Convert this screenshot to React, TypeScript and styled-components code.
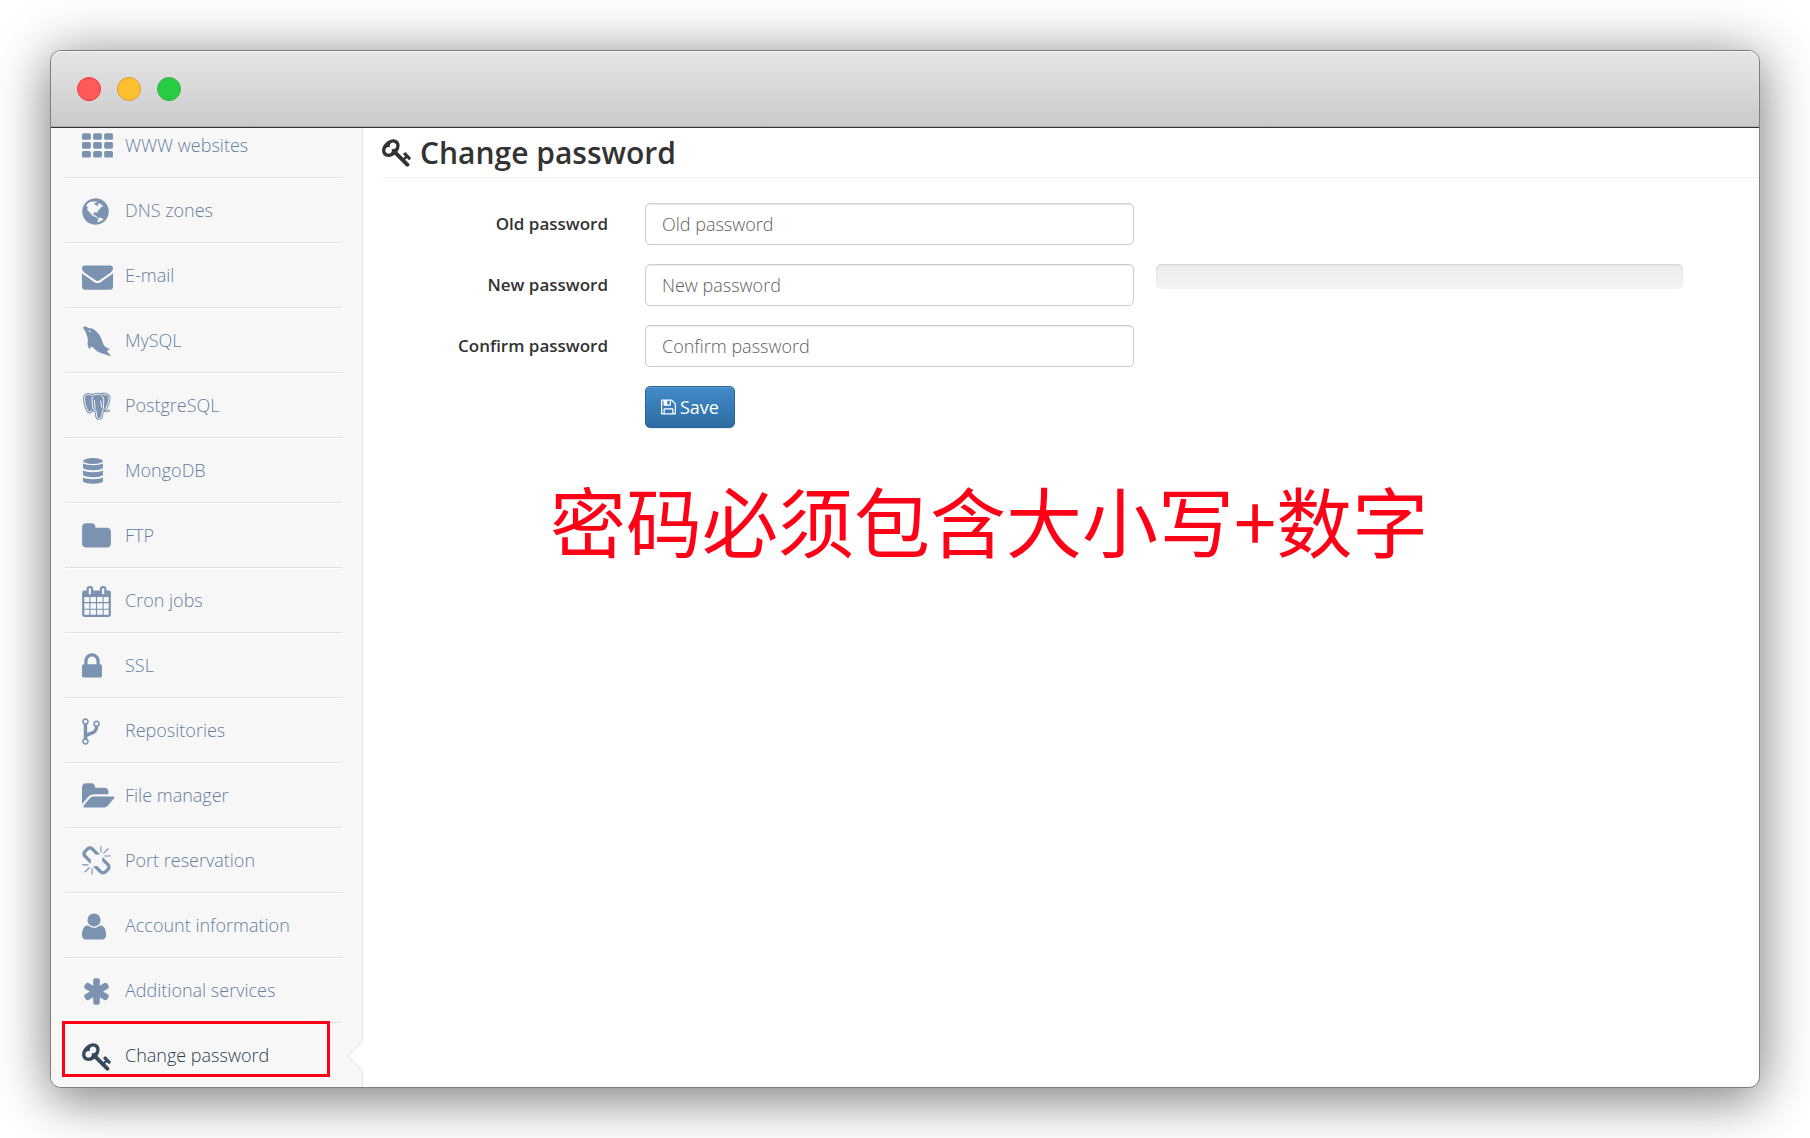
import React from "react";
import styled, { createGlobalStyle } from "styled-components";

const GlobalStyle = createGlobalStyle`
  *, *::before, *::after { box-sizing: border-box; }
  body {
    margin: 0;
    background: #fff;
    color: #333;
    font-family: "Open Sans", "Noto Sans", "Noto Sans CJK SC", sans-serif;
    font-size: 18px;
    line-height: 26px;
  }
`;

const Stage = styled.div`
  height: 100vh;
  min-height: 480px;
  padding: 50px;
  overflow: hidden;
`;

const Window = styled.div`
  height: 100%;
  display: flex;
  flex-direction: column;
  overflow: hidden;
  border: 1px solid #7f7f7f;
  border-radius: 11px;
  background: #fff;
  box-shadow: 0 0 60px rgba(0, 0, 0, 0.26), 0 14px 48px rgba(0, 0, 0, 0.34);
`;

const TitleBar = styled.header`
  flex: none;
  height: 77px;
  display: flex;
  align-items: center;
  gap: 16px;
  padding: 0 26px;
  background: linear-gradient(#e6e6e6, #cacaca);
  border-bottom: 1px solid #333;
  box-shadow: inset 0 1px 0 #f3f3f3, inset 0 -1px 0 #b0b0b0;
`;

const Light = styled.span<{ $fill: string; $edge: string }>`
  width: 24px;
  height: 24px;
  border-radius: 50%;
  background: ${(p) => p.$fill};
  border: 1px solid ${(p) => p.$edge};
`;

const Body = styled.div`
  flex: 1;
  min-height: 0;
  display: flex;
`;

const Sidebar = styled.nav`
  flex: none;
  width: 312px;
  padding: 0 20px 0 14px;
  background: #f7f7f7;
  border-right: 1px solid #d9e3e8;
`;

const MenuList = styled.ul`
  list-style: none;
  margin: -15px 0 0;
  padding: 0;
`;

const MenuItem = styled.li`
  position: relative;
  height: 65px;
  border-bottom: 1px solid #e0e1e1;
  box-shadow: 0 1px 0 #fff;

  &:last-child {
    border-bottom-color: transparent;
    box-shadow: none;
  }
`;

const MenuLink = styled.a<{ $active?: boolean }>`
  display: flex;
  align-items: center;
  height: 100%;
  padding-left: 17px;
  color: ${(p) => (p.$active ? "#2a3d50" : "#6580a2")};
  font-weight: 300;
  text-decoration: none;
`;

const IconSlot = styled.span<{ $active?: boolean }>`
  display: flex;
  width: 43px;
  padding-top: 2px;
  color: ${(p) => (p.$active ? "#34495e" : "#7b93b1")};
`;

const Notch = styled.svg`
  position: absolute;
  right: -21px;
  top: 18px;
`;

const Marker = styled.span`
  position: absolute;
  left: -3px;
  right: 12px;
  top: -2px;
  height: 56px;
  border: 3px solid #ff0016;
  pointer-events: none;
`;

const Main = styled.main`
  flex: 1;
  min-width: 0;
  padding-left: 19px;
`;

const Heading = styled.h1`
  display: flex;
  align-items: center;
  gap: 9px;
  height: 50px;
  margin: 0 0 25px;
  border-bottom: 1px solid #eee;
  font-size: 30px;
  font-weight: 600;
  line-height: 40px;
`;

const Form = styled.form`
  display: flex;
  flex-direction: column;
  gap: 19px;
  padding-right: 76px;
`;

const FormRow = styled.div`
  display: flex;
  align-items: flex-start;
`;

const Label = styled.label`
  flex: none;
  width: 226px;
  margin-right: 37px;
  font-size: 17px;
  line-height: 42px;
  font-weight: 600;
  text-align: right;
`;

const Field = styled.div`
  flex: 489 1 0;
  min-width: 0;
  margin-right: 22px;
`;

const Extra = styled.div`
  flex: 527 1 0;
  min-width: 0;
`;

const Input = styled.input`
  display: block;
  width: 100%;
  height: 42px;
  padding: 0 16px;
  border: 1px solid #ccc;
  border-radius: 5px;
  background: #fff;
  box-shadow: inset 0 1px 1px rgba(0, 0, 0, 0.08);
  color: #555;
  font: inherit;

  &::placeholder { color: #606060; opacity: 1; font-weight: 300; }
`;

const Meter = styled.div`
  height: 25px;
  border-radius: 5px;
  background: linear-gradient(#ebebeb, #f5f5f5);
  box-shadow: inset 0 1px 2px rgba(0, 0, 0, 0.12);
`;

const SaveButton = styled.button`
  display: inline-flex;
  align-items: center;
  gap: 4px;
  height: 42px;
  padding: 0 15px;
  border: 1px solid #2b669a;
  border-radius: 5px;
  background: linear-gradient(#428bca, #2d6ca2);
  box-shadow: inset 0 1px 0 rgba(255, 255, 255, 0.15), 0 1px 1px rgba(0, 0, 0, 0.08);
  color: #fff;
  font: inherit;
`;

const Note = styled.p`
  margin: 39px 0 0;
  padding-left: 168px;
  color: #ff0016;
  font-family: "Noto Sans CJK SC", sans-serif;
  font-size: 76px;
  line-height: 104px;
  white-space: nowrap;
`;

const GLYPHS = {
  globe: {
    width: 1536,
    d: "M768 1408q209 0 385.5 -103t279.5 -279.5t103 -385.5t-103 -385.5t-279.5 -279.5t-385.5 -103t-385.5 103t-279.5 279.5t-103 385.5t103 385.5t279.5 279.5t385.5 103zM1042 887q-2 -1 -9.5 -9.5t-13.5 -9.5q2 0 4.5 5t5 11t3.5 7q6 7 22 15q14 6 52 12q34 8 51 -11q-2 2 9.5 13t14.5 12q3 2 15 4.5t15 7.5l2 22q-12 -1 -17.5 7t-6.5 21q0 -2 -6 -8q0 7 -4.5 8t-11.5 -1t-9 -1q-10 3 -15 7.5t-8 16.5t-4 15q-2 5 -9.5 11t-9.5 10q-1 2 -2.5 5.5t-3 6.5t-4 5.5t-5.5 2.5t-7 -5t-7.5 -10t-4.5 -5q-3 2 -6 1.5t-4.5 -1t-4.5 -3t-5 -3.5q-3 -2 -8.5 -3t-8.5 -2q15 5 -1 11q-10 4 -16 3q9 4 7.5 12t-8.5 14h5q-1 4 -8.5 8.5t-17.5 8.5t-13 6q-8 5 -34 9.5t-33 0.5q-5 -6 -4.5 -10.5t4 -14t3.5 -12.5q1 -6 -5.5 -13t-6.5 -12q0 -7 14 -15.5t10 -21.5q-3 -8 -16 -16t-16 -12q-5 -8 -1.5 -18.5t10.5 -16.5q2 -2 1.5 -4t-3.5 -4.5t-5.5 -4t-6.5 -3.5l-3 -2q-11 -5 -20.5 6t-13.5 26q-7 25 -16 30q-23 8 -29 -1q-5 13 -41 26q-25 9 -58 4q6 1 0 15q-7 15 -19 12q3 6 4 17.5t1 13.5q3 13 12 23q1 1 7 8.5t9.5 13.5t0.5 6q35 -4 50 11q5 5 11.5 17t10.5 17q9 6 14 5.5t14.5 -5.5t14.5 -5q14 -1 15.5 11t-7.5 20q12 -1 3 17q-5 7 -8 9q-12 4 -27 -5q-8 -4 2 -8q-1 1 -9.5 -10.5t-16.5 -17.5t-16 5q-1 1 -5.5 13.5t-9.5 13.5q-8 0 -16 -15q3 8 -11 15t-24 8q19 12 -8 27q-7 4 -20.5 5t-19.5 -4q-5 -7 -5.5 -11.5t5 -8t10.5 -5.5t11.5 -4t8.5 -3q14 -10 8 -14q-2 -1 -8.5 -3.5t-11.5 -4.5t-6 -4q-3 -4 0 -14t-2 -14q-5 5 -9 17.5t-7 16.5q7 -9 -25 -6l-10 1q-4 0 -16 -2t-20.5 -1t-13.5 8q-4 8 0 20q1 4 4 2q-4 3 -11 9.5t-10 8.5q-46 -15 -94 -41q6 -1 12 1q5 2 13 6.5t10 5.5q34 14 42 7l5 5q14 -16 20 -25q-7 4 -30 1q-20 -6 -22 -12q7 -12 5 -18q-4 3 -11.5 10t-14.5 11t-15 5q-16 0 -22 -1q-146 -80 -235 -222q7 -7 12 -8q4 -1 5 -9t2.5 -11t11.5 3q9 -8 3 -19q1 1 44 -27q19 -17 21 -21q3 -11 -10 -18q-1 2 -9 9t-9 4q-3 -5 0.5 -18.5t10.5 -12.5q-7 0 -9.5 -16t-2.5 -35.5t-1 -23.5l2 -1q-3 -12 5.5 -34.5t21.5 -19.5q-13 -3 20 -43q6 -8 8 -9q3 -2 12 -7.5t15 -10t10 -10.5q4 -5 10 -22.5t14 -23.5q-2 -6 9.5 -20t10.5 -23q-1 0 -2.5 -1t-2.5 -1q3 -7 15.5 -14t15.5 -13q1 -3 2 -10t3 -11t8 -2q2 20 -24 62q-15 25 -17 29q-3 5 -5.5 15.5t-4.5 14.5q2 0 6 -1.5t8.5 -3.5t7.5 -4t2 -3q-3 -7 2 -17.5t12 -18.5t17 -19t12 -13q6 -6 14 -19.5t0 -13.5q9 0 20 -10t17 -20q5 -8 8 -26t5 -24q2 -7 8.5 -13.5t12.5 -9.5l16 -8t13 -7q5 -2 18.5 -10.5t21.5 -11.5q10 -4 16 -4t14.5 2.5t13.5 3.5q15 2 29 -15t21 -21q36 -19 55 -11q-2 -1 0.5 -7.5t8 -15.5t9 -14.5t5.5 -8.5q5 -6 18 -15t18 -15q6 4 7 9q-3 -8 7 -20t18 -10q14 3 14 32q-31 -15 -49 18q0 1 -2.5 5.5t-4 8.5t-2.5 8.5t0 7.5t5 3q9 0 10 3.5t-2 12.5t-4 13q-1 8 -11 20t-12 15q-5 -9 -16 -8t-16 9q0 -1 -1.5 -5.5t-1.5 -6.5q-13 0 -15 1q1 3 2.5 17.5t3.5 22.5q1 4 5.5 12t7.5 14.5t4 12.5t-4.5 9.5t-17.5 2.5q-19 -1 -26 -20q-1 -3 -3 -10.5t-5 -11.5t-9 -7q-7 -3 -24 -2t-24 5q-13 8 -22.5 29t-9.5 37q0 10 2.5 26.5t3 25t-5.5 24.5q3 2 9 9.5t10 10.5q2 1 4.5 1.5t4.5 0t4 1.5t3 6q-1 1 -4 3q-3 3 -4 3q7 -3 28.5 1.5t27.5 -1.5q15 -11 22 2q0 1 -2.5 9.5t-0.5 13.5q5 -27 29 -9q3 -3 15.5 -5t17.5 -5q3 -2 7 -5.5t5.5 -4.5t5 0.5t8.5 6.5q10 -14 12 -24q11 -40 19 -44q7 -3 11 -2t4.5 9.5t0 14t-1.5 12.5l-1 8v18l-1 8q-15 3 -18.5 12t1.5 18.5t15 18.5q1 1 8 3.5t15.5 6.5t12.5 8q21 19 15 35q7 0 11 9q-1 0 -5 3t-7.5 5t-4.5 2q9 5 2 16q5 3 7.5 11t7.5 10q9 -12 21 -2q8 8 1 16q5 7 20.5 10.5t18.5 9.5q7 -2 8 2t1 12t3 12q4 5 15 9t13 5l17 11q3 4 0 4q18 -2 31 11q10 11 -6 20q3 6 -3 9.5t-15 5.5q3 1 11.5 0.5t10.5 1.5q15 10 -7 16q-17 5 -43 -12zM879 10q206 36 351 189q-3 3 -12.5 4.5t-12.5 3.5q-18 7 -24 8q1 7 -2.5 13t-8 9t-12.5 8t-11 7q-2 2 -7 6t-7 5.5t-7.5 4.5t-8.5 2t-10 -1l-3 -1q-3 -1 -5.5 -2.5t-5.5 -3t-4 -3t0 -2.5q-21 17 -36 22q-5 1 -11 5.5t-10.5 7t-10 1.5t-11.5 -7q-5 -5 -6 -15t-2 -13q-7 5 0 17.5t2 18.5q-3 6 -10.5 4.5t-12 -4.5t-11.5 -8.5t-9 -6.5t-8.5 -5.5t-8.5 -7.5q-3 -4 -6 -12t-5 -11q-2 4 -11.5 6.5t-9.5 5.5q2 -10 4 -35t5 -38q7 -31 -12 -48q-27 -25 -29 -40q-4 -22 12 -26q0 -7 -8 -20.5t-7 -21.5q0 -6 2 -16z",
  },
  envelope: {
    width: 1792,
    d: "M1792 826v-794q0 -66 -47 -113t-113 -47h-1472q-66 0 -113 47t-47 113v794q44 -49 101 -87q362 -246 497 -345q57 -42 92.5 -65.5t94.5 -48t110 -24.5h1h1q51 0 110 24.5t94.5 48t92.5 65.5q170 123 498 345q57 39 100 87zM1792 1120q0 -79 -49 -151t-122 -123q-376 -261 -468 -325q-10 -7 -42.5 -30.5t-54 -38t-52 -32.5t-57.5 -27t-50 -9h-1h-1q-23 0 -50 9t-57.5 27t-52 32.5t-54 38t-42.5 30.5q-91 64 -262 182.5t-205 142.5q-62 42 -117 115.5t-55 136.5q0 78 41.5 130t118.5 52h1472q65 0 112.5 -47t47.5 -113z",
  },
  folder: {
    width: 1664,
    d: "M1664 928v-704q0 -92 -66 -158t-158 -66h-1216q-92 0 -158 66t-66 158v960q0 92 66 158t158 66h320q92 0 158 -66t66 -158v-32h672q92 0 158 -66t66 -158z",
  },
  calendar: {
    width: 1664,
    d: "M128 -128h288v288h-288v-288zM480 -128h320v288h-320v-288zM128 224h288v320h-288v-320zM480 224h320v320h-320v-320zM128 608h288v288h-288v-288zM864 -128h320v288h-320v-288zM480 608h320v288h-320v-288zM1248 -128h288v288h-288v-288zM864 224h320v320h-320v-320zM512 1088v288q0 13 -9.5 22.5t-22.5 9.5h-64q-13 0 -22.5 -9.5t-9.5 -22.5v-288q0 -13 9.5 -22.5t22.5 -9.5h64q13 0 22.5 9.5t9.5 22.5zM1248 224h288v320h-288v-320zM864 608h320v288h-320v-288zM1248 608h288v288h-288v-288zM1280 1088v288q0 13 -9.5 22.5t-22.5 9.5h-64q-13 0 -22.5 -9.5t-9.5 -22.5v-288q0 -13 9.5 -22.5t22.5 -9.5h64q13 0 22.5 9.5t9.5 22.5zM1664 1152v-1280q0 -52 -38 -90t-90 -38h-1408q-52 0 -90 38t-38 90v1280q0 52 38 90t90 38h128v96q0 66 47 113t113 47h64q66 0 113 -47t47 -113v-96h384v96q0 66 47 113t113 47h64q66 0 113 -47t47 -113v-96h128q52 0 90 -38t38 -90z",
  },
  lock: {
    width: 1152,
    d: "M320 768h512v192q0 106 -75 181t-181 75t-181 -75t-75 -181v-192zM1152 672v-576q0 -40 -28 -68t-68 -28h-960q-40 0 -68 28t-28 68v576q0 40 28 68t68 28h32v192q0 184 132 316t316 132t316 -132t132 -316v-192h32q40 0 68 -28t28 -68z",
  },
  fork: {
    width: 1024,
    d: "M288 64q0 40 -28 68t-68 28t-68 -28t-28 -68t28 -68t68 -28t68 28t28 68zM288 1216q0 40 -28 68t-68 28t-68 -28t-28 -68t28 -68t68 -28t68 28t28 68zM928 1088q0 40 -28 68t-68 28t-68 -28t-28 -68t28 -68t68 -28t68 28t28 68zM1024 1088q0 -52 -26 -96.5t-70 -69.5q-2 -287 -226 -414q-68 -38 -203 -81q-128 -40 -169.5 -71t-41.5 -100v-26q44 -25 70 -69.5t26 -96.5q0 -80 -56 -136t-136 -56t-136 56t-56 136q0 52 26 96.5t70 69.5v820q-44 25 -70 69.5t-26 96.5q0 80 56 136t136 56t136 -56t56 -136q0 -52 -26 -96.5t-70 -69.5v-497q54 26 154 57q55 17 87.5 29.5t70.5 31t59 39.5t40.5 51t28 69.5t8.5 91.5q-44 25 -70 69.5t-26 96.5q0 80 56 136t136 56t136 -56t56 -136z",
  },
  folderOpen: {
    width: 1920,
    d: "M1879 584q0 -31 -31 -66l-336 -396q-43 -51 -120.5 -86.5t-143.5 -35.5h-1088q-34 0 -60.5 13t-26.5 43q0 31 31 66l336 396q43 51 120.5 86.5t143.5 35.5h1088q34 0 60.5 -13t26.5 -43zM1536 928v-160h-832q-94 0 -197 -47.5t-164 -119.5l-337 -396l-5 -6q0 4 -0.5 12.5t-0.5 12.5v960q0 92 66 158t158 66h320q92 0 158 -66t66 -158v-32h544q92 0 158 -66t66 -158z",
  },
  chain: {
    width: 1664,
    d: "M439 265l-256 -256q-11 -9 -23 -9t-23 9q-9 10 -9 23t9 23l256 256q10 9 23 9t23 -9q9 -10 9 -23t-9 -23zM608 224v-320q0 -14 -9 -23t-23 -9t-23 9t-9 23v320q0 14 9 23t23 9t23 -9t9 -23zM384 448q0 -14 -9 -23t-23 -9h-320q-14 0 -23 9t-9 23t9 23t23 9h320q14 0 23 -9t9 -23zM1648 320q0 -120 -85 -203l-147 -146q-83 -83 -203 -83q-121 0 -204 85l-334 335q-21 21 -42 56l239 18l273 -274q28 -28 68 -27.5t68 27.5l147 146q28 28 28 67q0 40 -28 68l-274 275l18 239q35 -21 56 -42l336 -336q84 -86 84 -204zM1031 1044l-239 -18l-273 274q-28 28 -68 28q-39 0 -68 -27l-147 -146q-28 -28 -28 -67q0 -40 28 -68l274 -274l-18 -240q-35 21 -56 42l-336 336q-84 86 -84 204q0 120 85 203l147 146q83 83 203 83q121 0 204 -85l334 -335q21 -21 42 -56zM1664 960q0 -14 -9 -23t-23 -9h-320q-14 0 -23 9t-9 23t9 23t23 9h320q14 0 23 -9t9 -23zM1120 1504v-320q0 -14 -9 -23t-23 -9t-23 9t-9 23v320q0 14 9 23t23 9t23 -9t9 -23zM1527 1353l-256 -256q-11 -9 -23 -9t-23 9q-9 10 -9 23t9 23l256 256q10 9 23 9t23 -9q9 -10 9 -23t-9 -23z",
  },
  user: {
    width: 1408,
    d: "M1408 131q0 -120 -73 -189.5t-194 -69.5h-874q-121 0 -194 69.5t-73 189.5q0 53 3.5 103.5t14 109t26.5 108.5t43 97.5t62 81t85.5 53.5t111.5 20q9 0 42 -21.5t74.5 -48t108 -48t133.5 -21.5t133.5 21.5t108 48t74.5 48t42 21.5q61 0 111.5 -20t85.5 -53.5t62 -81t43 -97.5t26.5 -108.5t14 -109t3.5 -103.5zM1088 1024q0 -159 -112.5 -271.5t-271.5 -112.5t-271.5 112.5t-112.5 271.5t112.5 271.5t271.5 112.5t271.5 -112.5t112.5 -271.5z",
  },
  asterisk: {
    width: 1664,
    d: "M1482 486q46 -26 59.5 -77.5t-12.5 -97.5l-64 -110q-26 -46 -77.5 -59.5t-97.5 12.5l-266 153v-307q0 -52 -38 -90t-90 -38h-128q-52 0 -90 38t-38 90v307l-266 -153q-46 -26 -97.5 -12.5t-77.5 59.5l-64 110q-26 46 -12.5 97.5t59.5 77.5l266 154l-266 154q-46 26 -59.5 77.5t12.5 97.5l64 110q26 46 77.5 59.5t97.5 -12.5l266 -153v307q0 52 38 90t90 38h128q52 0 90 -38t38 -90v-307l266 153q46 26 97.5 12.5t77.5 -59.5l64 -110q26 -46 12.5 -97.5t-59.5 -77.5l-266 -154z",
  },
  key: {
    width: 1683,
    d: "M832 1024q0 80 -56 136t-136 56t-136 -56t-56 -136q0 -42 19 -83q-41 19 -83 19q-80 0 -136 -56t-56 -136t56 -136t136 -56t136 56t56 136q0 42 -19 83q41 -19 83 -19q80 0 136 56t56 136zM1683 320q0 -17 -49 -66t-66 -49q-9 0 -28.5 16t-36.5 33t-38.5 40t-24.5 26l-96 -96l220 -220q28 -28 28 -68q0 -42 -39 -81t-81 -39q-40 0 -68 28l-671 671q-176 -131 -365 -131q-163 0 -265.5 102.5t-102.5 265.5q0 160 95 313t248 248t313 95q163 0 265.5 -102.5t102.5 -265.5q0 -189 -131 -365l355 -355l96 96q-3 3 -26 24.5t-40 38.5t-33 36.5t-16 28.5q0 17 49 66t66 49q13 0 23 -10q6 -6 46 -44.5t82 -79.5t86.5 -86t73 -78t28.5 -41z",
  },
  floppy: {
    width: 1536,
    d: "M384 0h768v384h-768v-384zM1280 0h128v896q0 14 -10 38.5t-20 34.5l-281 281q-10 10 -34 20t-39 10v-416q0 -40 -28 -68t-68 -28h-576q-40 0 -68 28t-28 68v416h-128v-1280h128v416q0 40 28 68t68 28h832q40 0 68 -28t28 -68v-416zM896 928v320q0 13 -9.5 22.5t-22.5 9.5h-192q-13 0 -22.5 -9.5t-9.5 -22.5v-320q0 -13 9.5 -22.5t22.5 -9.5h192q13 0 22.5 9.5t9.5 22.5zM1536 896v-928q0 -40 -28 -68t-68 -28h-1344q-40 0 -68 28t-28 68v1344q0 40 28 68t68 28h928q40 0 88 -20t76 -48l280 -280q28 -28 48 -76t20 -88z",
  },
};

type GlyphName = keyof typeof GLYPHS;

/* The glyph outlines have their baseline at zero and grow upwards. */
function Glyph({ name, size = 31 }: { name: GlyphName; size?: number }) {
  const { width, d } = GLYPHS[name];
  return (
    <svg
      width={Math.round((width * size) / 1792)}
      height={size}
      viewBox={`0 0 ${width} 1792`}
      fill="currentColor"
      aria-hidden="true"
    >
      <path transform="translate(0 1536) scale(1 -1)" d={d} />
    </svg>
  );
}

function GridIcon() {
  return (
    <svg width="31" height="31" viewBox="0 0 1792 1792" fill="currentColor" aria-hidden="true">
      {[128, 640, 1152].map((y) =>
        [0, 640, 1280].map((x) => <rect key={`${x}-${y}`} x={x} y={y} width="512" height="384" rx="96" />)
      )}
    </svg>
  );
}

function DolphinIcon() {
  return (
    <svg width="31" height="31" viewBox="0 0 31 31" fill="currentColor" aria-hidden="true">
      <path
        fillRule="evenodd"
        d="M1 1.200C2 .2 4 .4 5.600 1.400C7 2.100 8.500 2 10 2.600C14 4.200 17.500 8.500 19.500 13C20.500 15.600 21 18 22.500 20C24 21.600 26.500 22.200 28 23.600C27 24.400 25.500 24.300 24.800 25C26 27 28 28.200 29 30C26.500 30.200 24.500 28.600 22 28C18.500 27.200 15 25.600 12.800 23.200C11.500 21.800 10.500 21.500 9.600 20.600C8.600 21.200 8.600 22.800 7.800 23.200C6 21.500 5.200 18.500 5.800 15.500C6.200 13.500 5.500 11.500 4.800 9.500C4 7.500 3.800 6 2.800 4.500C2.300 3.600 1.200 2.600 1 1.200ZM7 4.200C6.600 5 7.400 6.400 8.400 6.200C9 5.400 8 4 7 4.200Z"
      />
    </svg>
  );
}

/* Each part has a thin outline, a light gap inside it and a solid core. */
const ELEPHANT_PARTS = [
  "M9.500 3C5 1.500 2.200 3.200 2.500 7.500C2.800 11.500 4 16 6 19C7.500 20.800 9 19.500 10.300 18L12 10Z",
  "M19 2.500C23 1.200 27 3 27 6.500C27 11 24.500 15 22.500 18L19 12Z",
  "M10.500 4.500C12.500 1.500 19 1.200 21 5C22.300 8 21.500 12 21.300 15C21.300 16.500 21.500 17.500 20.500 18.500C19.500 21 20.500 23.500 19 25.500C18 27 15.500 27 14.800 25C14.200 23 14.500 20.500 14 18.500C12 18.500 10.800 17.500 10.800 15.500C10.200 12 9.500 7.500 10.500 4.500Z",
];

function ElephantIcon() {
  return (
    <svg width="30" height="29" viewBox="0 0 30 29" fill="none" strokeLinejoin="round" aria-hidden="true">
      {ELEPHANT_PARTS.map((d) => (
        <React.Fragment key={d}>
          <path d={d} stroke="currentColor" strokeWidth="3" />
          <path d={d} fill="currentColor" stroke="#f7f7f7" />
        </React.Fragment>
      ))}
      <path d="M21.500 19C23.500 20.200 26 20.200 28 18.500C26.500 18 24.500 18.400 23 17.600" stroke="currentColor" />
      <path d="M12.500 8C12 11 13.500 14 13 17M18.500 8.500C19.800 10.500 18.500 13.500 20 15.500" stroke="#f7f7f7" />
    </svg>
  );
}

function DatabaseIcon() {
  return (
    <svg width="22" height="31" viewBox="0 0 22 31" fill="currentColor" aria-hidden="true">
      <ellipse cx="11" cy="5" rx="10" ry="3" />
      <path d="M1 7.500C5 9.800 17 9.800 21 7.500V12C18 15 4 15 1 12Z" />
      <path d="M1 14.500C5 16.800 17 16.800 21 14.500V19C18 22 4 22 1 19Z" />
      <path d="M1 21.500C5 23.800 17 23.800 21 21.500V25.500C18 28.500 4 28.500 1 25.500Z" />
    </svg>
  );
}

const MENU: { label: string; icon: React.ReactNode; active?: boolean }[] = [
  { label: "WWW websites", icon: <GridIcon /> },
  { label: "DNS zones", icon: <Glyph name="globe" /> },
  { label: "E-mail", icon: <Glyph name="envelope" /> },
  { label: "MySQL", icon: <DolphinIcon /> },
  { label: "PostgreSQL", icon: <ElephantIcon /> },
  { label: "MongoDB", icon: <DatabaseIcon /> },
  { label: "FTP", icon: <Glyph name="folder" /> },
  { label: "Cron jobs", icon: <Glyph name="calendar" /> },
  { label: "SSL", icon: <Glyph name="lock" /> },
  { label: "Repositories", icon: <Glyph name="fork" /> },
  { label: "File manager", icon: <Glyph name="folderOpen" /> },
  { label: "Port reservation", icon: <Glyph name="chain" /> },
  { label: "Account information", icon: <Glyph name="user" /> },
  { label: "Additional services", icon: <Glyph name="asterisk" /> },
  { label: "Change password", icon: <Glyph name="key" />, active: true },
];

const FIELDS = [
  { id: "old-password", label: "Old password" },
  { id: "new-password", label: "New password", meter: true },
  { id: "confirm-password", label: "Confirm password" },
];

export default function App() {
  return (
    <>
      <GlobalStyle />
      <Stage>
        <Window>
          <TitleBar>
            <Light $fill="#ff5a5a" $edge="#f8323a" />
            <Light $fill="#ffbf2f" $edge="#dc9a3c" />
            <Light $fill="#27cc42" $edge="#3fae4c" />
          </TitleBar>
          <Body>
            <Sidebar>
              <MenuList>
                {MENU.map((item) => (
                  <MenuItem key={item.label}>
                    <MenuLink href="#" $active={item.active} aria-current={item.active ? "page" : undefined}>
                      <IconSlot $active={item.active}>{item.icon}</IconSlot>
                      {item.label}
                    </MenuLink>
                    {item.active && (
                      <>
                        <Notch width="16" height="30" viewBox="0 0 16 30" aria-hidden="true">
                          <path d="M16 0V30L15 29L1 15L15 1Z" fill="#fff" />
                          <path d="M15.500 .5L1 15L15.500 29.500" fill="none" stroke="#d9e3e8" />
                        </Notch>
                        <Marker />
                      </>
                    )}
                  </MenuItem>
                ))}
              </MenuList>
            </Sidebar>
            <Main>
              <Heading>
                <Glyph name="key" size={31} />
                Change password
              </Heading>
              <Form onSubmit={(e) => e.preventDefault()}>
                {FIELDS.map((f) => (
                  <FormRow key={f.id}>
                    <Label htmlFor={f.id}>{f.label}</Label>
                    <Field>
                      <Input id={f.id} type="password" placeholder={f.label} />
                    </Field>
                    <Extra>{f.meter && <Meter />}</Extra>
                  </FormRow>
                ))}
                <FormRow>
                  <Label as="span" />
                  <SaveButton type="submit">
                    <Glyph name="floppy" size={18} />
                    Save
                  </SaveButton>
                </FormRow>
              </Form>
              <Note>密码必须包含大小写+数字</Note>
            </Main>
          </Body>
        </Window>
      </Stage>
    </>
  );
}
